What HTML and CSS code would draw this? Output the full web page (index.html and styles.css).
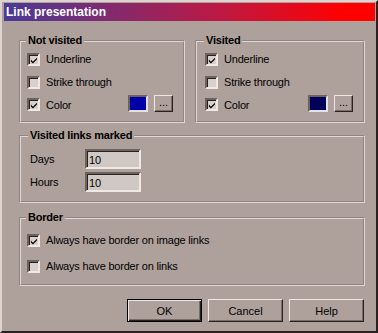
FILE: index.html
```html
<!DOCTYPE html>
<html lang="en">
<head>
    <meta charset="utf-8">
    <title>Link presentation</title>
    <link rel="stylesheet" href="styles.css">
</head>
<body>
    <div class="window">
        <div class="titlebar">Link presentation</div>
        <div class="content">
            <div class="top-row">
                <fieldset class="group group-left">
                    <legend>Not visited</legend>
                    <label class="check first"><span class="box"><svg width="9" height="9" viewBox="0 0 9 9"><path d="M1 3.5 L3.3 5.8 L7.8 1.3 L7.8 3.3 L3.3 7.8 L1 5.5 Z" fill="#000"/></svg></span>Underline</label>
                    <label class="check"><span class="box"></span>Strike through</label>
                    <div class="check color-row">
                        <span class="box"><svg width="9" height="9" viewBox="0 0 9 9"><path d="M1 3.5 L3.3 5.8 L7.8 1.3 L7.8 3.3 L3.3 7.8 L1 5.5 Z" fill="#000"/></svg></span>
                        <span>Color</span>
                        <span class="swatch swatch-blue"></span>
                        <button class="btn more">...</button>
                    </div>
                </fieldset>
                <fieldset class="group group-right">
                    <legend>Visited</legend>
                    <label class="check first"><span class="box"><svg width="9" height="9" viewBox="0 0 9 9"><path d="M1 3.5 L3.3 5.8 L7.8 1.3 L7.8 3.3 L3.3 7.8 L1 5.5 Z" fill="#000"/></svg></span>Underline</label>
                    <label class="check"><span class="box"></span>Strike through</label>
                    <div class="check color-row">
                        <span class="box"><svg width="9" height="9" viewBox="0 0 9 9"><path d="M1 3.5 L3.3 5.8 L7.8 1.3 L7.8 3.3 L3.3 7.8 L1 5.5 Z" fill="#000"/></svg></span>
                        <span>Color</span>
                        <span class="swatch swatch-navy"></span>
                        <button class="btn more">...</button>
                    </div>
                </fieldset>
            </div>

            <fieldset class="group group-marked">
                <legend>Visited links marked</legend>
                <div class="field first">
                    <span class="field-label">Days</span>
                    <input class="text-input" type="text" value="10">
                </div>
                <div class="field">
                    <span class="field-label">Hours</span>
                    <input class="text-input" type="text" value="10">
                </div>
            </fieldset>

            <fieldset class="group group-border">
                <legend>Border</legend>
                <label class="check first"><span class="box"><svg width="9" height="9" viewBox="0 0 9 9"><path d="M1 3.5 L3.3 5.8 L7.8 1.3 L7.8 3.3 L3.3 7.8 L1 5.5 Z" fill="#000"/></svg></span>Always have border on image links</label>
                <label class="check wide"><span class="box"></span>Always have border on links</label>
            </fieldset>

            <div class="buttons">
                <button class="btn default">OK</button>
                <button class="btn">Cancel</button>
                <button class="btn">Help</button>
            </div>
        </div>
    </div>
</body>
</html>
```

FILE: styles.css
```css
* {
    margin: 0;
    padding: 0;
    box-sizing: border-box;
}

body {
    background: #aea09b;
    font-family: "Liberation Sans", Arial, sans-serif;
    font-size: 11px;
    letter-spacing: -0.2px;
    color: #000;
}

.window {
    width: 378px;
    height: 333px;
    border: 2px solid;
    border-color: #ddd3cf #2a2222 #2a2222 #ddd3cf;
    padding: 1px 1px 1px 2px;
    background: #aea09b;
}

.titlebar {
    height: 18px;
    line-height: 18px;
    padding-left: 2px;
    color: #fff;
    font-size: 12px;
    font-weight: bold;
    letter-spacing: 0;
    background: linear-gradient(to right, #4a3a98, #c01840 60%, #ff0000 92%);
}

.content {
    padding: 13px 10px 0 15px;
}

.top-row {
    display: flex;
    gap: 10px;
}

.group {
    border: 2px groove #e2d6d2;
    padding: 0 10px 0 6px;
    min-width: 0;
}

.group legend {
    padding: 0 2px;
    margin-left: -1px;
    font-weight: bold;
    line-height: 13px;
}

.group-left {
    width: 166px;
    padding-bottom: 9px;
}

.group-right {
    width: 170px;
    padding-left: 8px;
    padding-bottom: 9px;
}

.check {
    display: flex;
    align-items: center;
    height: 13px;
    line-height: 13px;
    margin-top: 10px;
}

.check.first {
    margin-top: 6px;
}

.box {
    width: 13px;
    height: 13px;
    margin-right: 6px;
    flex-shrink: 0;
    background: #d8d0cc;
    border: 2px solid;
    border-color: #6e625e #f0e8e4 #f0e8e4 #6e625e;
    box-shadow: inset 1px 1px 0 #2a2222;
    display: flex;
    align-items: center;
    justify-content: center;
}

.box svg {
    display: block;
    margin: 1px 0 0 1px;
}

.color-row {
    height: 17px;
    align-items: flex-end;
    margin-top: 6px;
}

.color-row .box {
    margin-bottom: 1px;
}

.swatch {
    width: 20px;
    height: 17px;
    margin-left: auto;
    border: 2px solid;
    border-color: #6e625e #e8e0f0 #e8e0f0 #6e625e;
}

.swatch-blue {
    background: #0000a8;
}

.swatch-navy {
    background: #00005a;
}

.btn {
    font-family: "Liberation Sans", Arial, sans-serif;
    font-size: 11px;
    color: #000;
    background: #aea09b;
    border: 1px solid;
    border-color: #eee6e2 #2a2222 #2a2222 #eee6e2;
    box-shadow: inset -1px -1px 0 #7a6c68;
}

.more {
    width: 19px;
    height: 17px;
    margin-left: 6px;
    line-height: 10px;
    padding-bottom: 4px;
}

.group-marked {
    margin-top: 6px;
    padding: 0 10px 9px 8px;
}

.field {
    display: flex;
    align-items: center;
    margin-top: 3px;
}

.field.first {
    margin-top: 7px;
}

.field-label {
    width: 56px;
    padding-left: 1px;
}

.text-input {
    width: 56px;
    height: 20px;
    padding: 2px 2px 0;
    font-family: "Liberation Sans", Arial, sans-serif;
    font-size: 11px;
    background: #d0c8c4;
    border: 2px solid;
    border-color: #6e625e #f0e8e4 #f0e8e4 #6e625e;
    box-shadow: inset 1px 1px 0 #2a2222;
    outline: none;
}

.group-border {
    margin-top: 8px;
    padding: 0 10px 11px 6px;
}

.group-border .check.first {
    margin-top: 10px;
}

.group-border .check.wide {
    margin-top: 13px;
}

.buttons {
    display: flex;
    justify-content: flex-end;
    gap: 6px;
    margin-top: 13px;
    padding-right: 1px;
}

.buttons .btn {
    width: 75px;
    height: 23px;
}

.buttons .default {
    border: 1px solid #000;
    box-shadow: inset 1px 1px 0 #eee6e2, inset -1px -1px 0 #2a2222, inset -2px -2px 0 #7a6c68;
}
```
